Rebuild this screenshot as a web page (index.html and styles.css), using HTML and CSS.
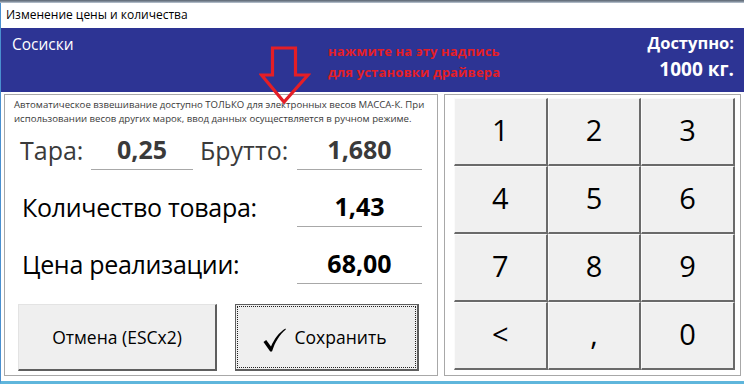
FILE: index.html
```html
<!DOCTYPE html>
<html lang="ru">
<head>
<meta charset="utf-8">
<title>Изменение цены и количества</title>
<link rel="stylesheet" href="styles.css">
</head>
<body>
<div class="bgstrip"></div>
<div class="window">
  <div class="titlebar">Изменение цены и количества</div>
  <div class="header">
    <div class="item-name">Сосиски</div>
    <div class="driver">нажмите на эту надпись<br>для установки драйвера</div>
    <div class="avail">
      <div class="avail-label">Доступно:</div>
      <div class="avail-value">1000 кг.</div>
    </div>
  </div>
  <div class="main">
    <div class="form">
      <div class="hint">Автоматическое взвешивание доступно ТОЛЬКО для электронных весов МАССА-К. При использовании весов других марок, ввод данных осуществляется в ручном режиме.</div>
      <div class="row row-first">
        <div class="label l-tara">Тара:</div>
        <div class="value v-tara">0,25</div>
        <div class="label l-brutto">Брутто:</div>
        <div class="value v-wide">1,680</div>
      </div>
      <div class="row">
        <div class="label l-long dark">Количество товара:</div>
        <div class="value v-wide dark">1,43</div>
      </div>
      <div class="row">
        <div class="label l-long dark">Цена реализации:</div>
        <div class="value v-wide dark">68,00</div>
      </div>
      <div class="actions">
        <button class="btn btn-cancel">Отмена (ESCx2)</button>
        <button class="btn btn-save"><span class="focus"><svg class="check" width="23" height="24" viewBox="0 0 23 24"><path d="M0.5 14 L3.2 12 L8 18.5 C11.5 10.5 16 4.5 22.5 0.5 L22.8 1.4 C16.5 6.5 12 14 9 23.5 L7.2 23.5 Z" fill="#000"/></svg>Сохранить</span></button>
      </div>
    </div>
    <div class="keypad">
      <div class="keys">
        <button class="key">1</button>
        <button class="key">2</button>
        <button class="key">3</button>
        <button class="key">4</button>
        <button class="key">5</button>
        <button class="key">6</button>
        <button class="key">7</button>
        <button class="key">8</button>
        <button class="key">9</button>
        <button class="key">&lt;</button>
        <button class="key">,</button>
        <button class="key">0</button>
      </div>
    </div>
  </div>
  <svg class="arrow" width="52" height="60" viewBox="0 0 52 60"><polygon points="13.5,2 36.5,2 36.5,29 49,29 25,56 2.5,29 13.5,29" fill="none" stroke="#e41e26" stroke-width="3.2" stroke-linejoin="miter"/></svg>
</div>
</body>
</html>
```
FILE: styles.css
```css
html, body {
  margin: 0;
  padding: 0;
}
body {
  width: 744px;
  height: 384px;
  overflow: hidden;
  background: #ffffff;
  font-family: "Open Sans", "Noto Sans", sans-serif;
  position: relative;
}
.bgstrip {
  height: 3px;
  background: linear-gradient(to bottom, #5a6470 0, #8e9aa8 2px, #c9d3de 3px);
}
.window {
  position: relative;
  height: 378px;
  border-left: 1px solid #4a8fcf;
  border-bottom: 3px solid #5fb6dc;
  background: #fff;
}
.titlebar {
  height: 25px;
  line-height: 24px;
  padding-left: 5px;
  font-size: 12px;
  color: #000;
  background: #fff;
}
.header {
  height: 64px;
  background: #2d3494;
  color: #fff;
  display: flex;
  padding: 0 10px 0 11px;
}
.item-name {
  width: 316px;
  font-size: 15.5px;
  line-height: 20px;
  padding-top: 6px;
}
.driver {
  color: #e41e26;
  font-weight: 700;
  font-size: 13px;
  line-height: 21px;
  padding-top: 13px;
  letter-spacing: 0.15px;
}
.avail {
  margin-left: auto;
  text-align: right;
  font-weight: 700;
}
.avail-label {
  font-size: 16.5px;
  line-height: 20px;
  padding-top: 5px;
}
.avail-value {
  font-size: 19px;
  line-height: 24px;
  padding-top: 4px;
}
.main {
  display: flex;
  gap: 6px;
  padding: 2px 0 0 3px;
}
.form {
  width: 432px;
  height: 280px;
  border: 1px solid #a8a8a8;
  display: flex;
  flex-direction: column;
}
.hint {
  font-size: 9.6px;
  line-height: 14px;
  color: #3a3a3a;
  padding: 3px 8px 0 9px;
  height: 28px;
}
.row {
  display: flex;
  align-items: flex-end;
  padding-left: 15px;
  margin-top: 16px;
  height: 41px;
  font-size: 25px;
  color: #3a3a3a;
}
.row-first {
  margin-top: 3px;
}
.label {
  line-height: 40px;
  white-space: nowrap;
}
.value {
  height: 40px;
  line-height: 40px;
  border-bottom: 1px solid #a8a8a8;
  text-align: center;
  font-weight: 700;
}
.dark {
  color: #000;
}
.l-tara {
  width: 71px;
}
.v-tara {
  width: 102px;
}
.l-brutto {
  width: 97px;
  margin-left: 7px;
}
.l-long {
  width: 275px;
  padding-left: 2px;
  letter-spacing: -0.3px;
}
.v-wide {
  width: 125px;
}
.actions {
  display: flex;
  gap: 18px;
  padding-left: 13px;
  margin-top: 20px;
}
.btn {
  font-family: "Open Sans", "Noto Sans", sans-serif;
  font-size: 17.5px;
  color: #000;
  background: #efefef;
  height: 67px;
  margin: 0;
  padding: 0;
  cursor: default;
}
.btn-cancel {
  width: 199px;
  border-style: solid;
  border-width: 1px 2px 2px 1px;
  border-color: #e3e3e3 #5e5e5e #5e5e5e #e3e3e3;
}
.btn-save {
  width: 184px;
  border: 1px solid #5e5e5e;
  border-width: 1px 2px 2px 1px;
  padding: 1px;
}
.focus {
  display: flex;
  align-items: center;
  justify-content: center;
  gap: 9px;
  height: 100%;
  border: 1px dotted #222;
  box-sizing: border-box;
  padding-right: 4px;
}
.check {
  display: block;
  margin-top: 5px;
}
.keypad {
  width: 297px;
  border: 1px solid #a8a8a8;
  padding: 3px 0 0 9px;
  box-sizing: border-box;
  height: 282px;
}
.keys {
  width: 281px;
  height: 272px;
  display: grid;
  grid-template-columns: repeat(3, 1fr);
  grid-template-rows: repeat(4, 1fr);
}
.key {
  font-family: "Open Sans", "Noto Sans", sans-serif;
  font-size: 29px;
  color: #000;
  background: #f0f0f0;
  border-style: solid;
  border-width: 1px 2px 2px 1px;
  border-color: #fbfbfb #6a6a6a #6a6a6a #fbfbfb;
  margin: 0;
  padding: 0 0 4px 0;
  cursor: default;
}
.arrow {
  position: absolute;
  left: 258px;
  top: 43px;
}
```
